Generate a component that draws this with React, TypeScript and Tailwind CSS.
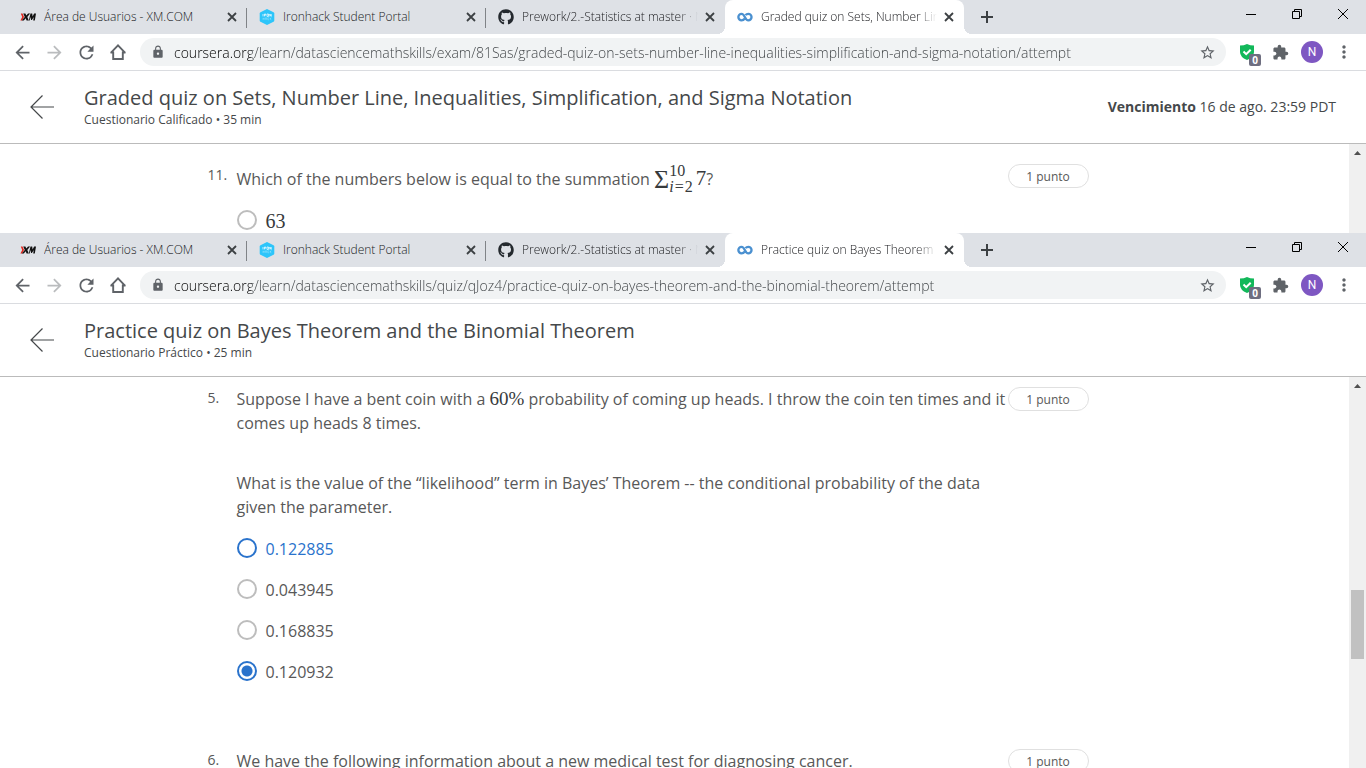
import React, { ReactNode } from "react";
import { FaGithub } from "react-icons/fa";
import {
  MdArrowBack,
  MdArrowForward,
  MdRefresh,
  MdLock,
  MdStarBorder,
  MdExtension,
  MdMoreVert,
} from "react-icons/md";

const UI = "font-['Open_Sans','Noto_Sans',sans-serif]";

function XmLogo() {
  return (
    <svg viewBox="0 0 16 16" className="size-4 shrink-0" aria-hidden="true">
      <path d="M.8 4.600h1.700L4 8l-1.900 3.400H.4L2.200 8z" fill="#e2231a" />
      <path
        d="M3.200 4.600h2.200l.9 2 1.800-2h2L7.300 7.900l1.500 3.500H6.600l-.9-2.100-1.900 2.100H1.700l3.100-3.500zM10.500 4.600h1.700l.4 2.800 1.500-2.800H16l-1.200 6.800h-1.600l.6-3.500-1.900 3.100h-.8l-.8-3-.6 3.400H8.800z"
        fill="#111"
      />
    </svg>
  );
}

function IronhackLogo() {
  return (
    <svg viewBox="0 0 16 16" className="size-4 shrink-0" aria-hidden="true">
      <path d="M8 0l6.500 3.200a1.500 1.500 0 0 1 .8 1.300v7a1.500 1.500 0 0 1-.8 1.300L8 16l-6.500-3.200a1.500 1.500 0 0 1-.8-1.300v-7a1.500 1.500 0 0 1 .8-1.300z" fill="#2dc5fa" />
      <path d="M4 5v2.400M5.500 7.400V5h1.200v1.200H5.500M8 5h1.500v2.400H8zM10.800 7.400V5l1.400 2.400V5" fill="none" stroke="#fff" strokeWidth=".7" />
      <path d="M4 8.800v2M5.200 8.800v2M4 9.800h1.200M6.400 10.800v-2h1.200v2M10 8.800H8.800v2H10M11.200 8.800v2M12.400 8.800l-1.200 1 1.200 1" fill="none" stroke="#9fe4fd" strokeWidth=".5" />
    </svg>
  );
}

function CourseraLogo() {
  return (
    <svg viewBox="0 0 16 16" className="size-4 shrink-0" fill="none" stroke="#4a90d0" strokeWidth="2.300" aria-hidden="true">
      <path d="M7.600 9.800C6.800 10.900 5.800 11.300 4.600 11.300a3.200 3.200 0 0 1 0-6.500C8 4.800 7.600 11.300 11.300 11.300a3.200 3.200 0 0 0 0-6.500C10.200 4.800 9.200 5.200 8.500 6.200" />
    </svg>
  );
}

function CloseGlyph() {
  return (
    <svg viewBox="0 0 16 16" className="size-4" stroke="#3c4043" strokeWidth="1.800" aria-hidden="true">
      <path d="M4 4l8 8M12 4l-8 8" />
    </svg>
  );
}

function Tab({ icon, title, active, divider, fade }: { icon: ReactNode; title: string; active?: boolean; divider?: boolean; fade?: boolean }) {
  return (
    <div
      className={`relative flex min-w-0 shrink basis-[239px] items-center pl-3 pr-[7px] ${active ? "rounded-t-lg bg-white" : ""}`}
    >
      {icon}
      <span
        className={`ml-2 mr-1 min-w-0 flex-1 overflow-hidden whitespace-nowrap text-xs font-light text-[#202124] ${
          fade ? "[mask-image:linear-gradient(90deg,#000_calc(100%-20px),transparent)]" : ""
        }`}
      >
        {title}
      </span>
      <button aria-label="Cerrar pestaña" className="flex size-4 shrink-0 items-center justify-center">
        <CloseGlyph />
      </button>
      {divider && <span className="absolute right-0 top-2 h-5 w-px bg-[#808387]" />}
      {active && (
        <>
          <span className="absolute -left-2 bottom-0 size-2 bg-[radial-gradient(circle_at_0_0,transparent_8px,white_8px)]" />
          <span className="absolute -right-2 bottom-0 size-2 bg-[radial-gradient(circle_at_100%_0,transparent_8px,white_8px)]" />
        </>
      )}
    </div>
  );
}

function TabStrip({ title }: { title: string }) {
  return (
    <div className="flex h-[34px] shrink-0 bg-[#dee1e6]">
      <div className="flex min-w-0 flex-1 pl-2">
        <Tab icon={<XmLogo />} title="Área de Usuarios - XM.COM" divider />
        <Tab icon={<IronhackLogo />} title="Ironhack Student Portal" divider />
        <Tab icon={<FaGithub className="size-4 shrink-0 text-[#24292e]" />} title="Prework/2.-Statistics at master · N" fade />
        <Tab icon={<CourseraLogo />} title={title} active fade />
        <button aria-label="Nueva pestaña" className="ml-[15px] flex w-4 shrink-0 items-center justify-center">
          <svg viewBox="0 0 16 16" className="size-4" stroke="#3c4043" strokeWidth="2" aria-hidden="true">
            <path d="M8 2v12M2 8h12" />
          </svg>
        </button>
      </div>
      <div className="flex h-7 shrink-0 text-black">
        <button aria-label="Minimizar" className="flex w-[46px] items-center justify-center">
          <svg viewBox="0 0 10 10" className="size-[10px]" stroke="currentColor" aria-hidden="true">
            <path d="M0 5.500h10" />
          </svg>
        </button>
        <button aria-label="Restaurar" className="flex w-[46px] items-center justify-center">
          <svg viewBox="0 0 10 10" className="size-[10px]" fill="none" stroke="currentColor" aria-hidden="true">
            <path d="M.5 2.500h7v7h-7zM2.500 2.500v-2h7v7h-2" />
          </svg>
        </button>
        <button aria-label="Cerrar" className="flex w-[46px] items-center justify-center">
          <svg viewBox="0 0 10 10" className="size-[10px]" stroke="currentColor" aria-hidden="true">
            <path d="M0 0l10 10M10 0L0 10" />
          </svg>
        </button>
      </div>
    </div>
  );
}

function ToolButton({ label, children }: { label: string; children: ReactNode }) {
  return (
    <button aria-label={label} className="flex size-8 shrink-0 items-center justify-center text-[#5f6368]">
      {children}
    </button>
  );
}

function HomeIcon() {
  return (
    <svg viewBox="0 0 18 18" className="size-[18px]" fill="none" stroke="currentColor" strokeWidth="1.900" aria-hidden="true">
      <path d="M1.800 9.800L9 2.400l7.200 7.400M4.200 8.500v7.500h9.600V8.500M1.500 9.500h3M13.500 9.500h3" />
    </svg>
  );
}

function Toolbar({ url }: { url: string }) {
  return (
    <div className="flex h-[37px] shrink-0 items-center border-b border-[#dadce0] bg-white pl-[6px] pr-[6px]">
      <ToolButton label="Atrás"><MdArrowBack className="size-[21px]" /></ToolButton>
      <ToolButton label="Adelante"><MdArrowForward className="size-[21px] text-[#babcbe]" /></ToolButton>
      <ToolButton label="Recargar"><MdRefresh className="size-[21px]" /></ToolButton>
      <ToolButton label="Inicio"><HomeIcon /></ToolButton>
      <div className="ml-[6px] flex h-7 min-w-0 flex-1 items-center rounded-full bg-[#f1f3f4] pl-[11px] pr-[10px]">
        <MdLock className="size-[14px] shrink-0 text-[#5f6368]" />
        <input
          aria-label="Barra de direcciones"
          defaultValue={url}
          className="ml-[9px] h-7 min-w-0 flex-1 bg-[linear-gradient(90deg,#000_77px,#3c4043_77px)] bg-clip-text text-sm font-light text-transparent outline-none"
        />
        <button aria-label="Añadir a marcadores" className="shrink-0 text-[#5f6368]"><MdStarBorder className="size-[17px]" /></button>
      </div>
      <button aria-label="Protección" className="relative ml-[11px] flex size-5 shrink-0 items-center justify-center">
        <svg viewBox="0 0 16 16" className="size-4" aria-hidden="true">
          <path d="M1 1.500Q5 1.500 8 0q3 1.500 7 1.500V8q0 5-7 8-7-3-7-8z" fill="#12b85a" />
          <path d="M4.500 7.500l2.700 2.700 4.500-4.500" fill="none" stroke="#fff" strokeWidth="2" />
        </svg>
        <span className="absolute -right-1 top-3 flex size-3 items-center justify-center rounded-xs bg-[#6e6e80] text-[10px] font-bold leading-3 text-white">0</span>
      </button>
      <div className="ml-[7px] flex items-center">
        <ToolButton label="Extensiones"><MdExtension className="size-[17px]" /></ToolButton>
        <ToolButton label="Perfil">
          <span className="flex size-[22px] items-center justify-center rounded-full bg-[#7e57c2] font-[Roboto,sans-serif] text-xs text-white">N</span>
        </ToolButton>
        <ToolButton label="Menú"><MdMoreVert className="size-5" /></ToolButton>
      </div>
    </div>
  );
}

function QuizHeader({ title, meta, due }: { title: string; meta: string; due?: ReactNode }) {
  return (
    <header className="flex h-[73px] shrink-0 items-center border-b border-[#bbbbbb] bg-white pl-[30px] pr-[30px] text-[#45484a]">
      <a href="#volver" aria-label="Volver" className="shrink-0">
        <svg viewBox="0 0 24 24" className="size-6" fill="none" stroke="currentColor" strokeWidth="1.200" aria-hidden="true">
          <path d="M24 12H1M12.500 .5L1 12l11.500 11.500" />
        </svg>
      </a>
      <div className="ml-[30px] min-w-0 flex-1">
        <h1 className="text-xl leading-[26px]">{title}</h1>
        <p className="text-xs leading-[18px]">{meta}</p>
      </div>
      {due && <p className="shrink-0 text-sm">{due}</p>}
    </header>
  );
}

function Scroller({ thumb }: { thumb?: boolean }) {
  return (
    <div className="flex w-[17px] shrink-0 flex-col items-center bg-[#f0f0f0]" aria-hidden="true">
      <svg viewBox="0 0 17 17" className="size-[17px] shrink-0" fill="#505050">
        <path d="M5 11h7L8.500 7z" />
      </svg>
      {thumb && <div className="mt-[196px] h-[69px] w-[13px] bg-[#c1c1c1]" />}
    </div>
  );
}

function Question({ number, children }: { number: string; children: ReactNode }) {
  return (
    <section className="mx-auto flex w-full max-w-[934px] items-start text-[#585858]">
      <span className="w-[29px] shrink-0 text-sm leading-[22px]">{number}</span>
      <div className="min-w-0 max-w-[771px] flex-1 text-base">{children}</div>
      <span className="flex h-6 w-[81px] shrink-0 items-center justify-center rounded-full border border-[#e0e0e0] pt-0.5 text-xs">1 punto</span>
    </section>
  );
}

function Option({ group, label, focused, checked, math }: { group: string; label: string; focused?: boolean; checked?: boolean; math?: boolean }) {
  return (
    <label className={`flex h-[41px] items-center gap-[9px] ${focused ? "text-[#2a73cc]" : ""}`}>
      <input
        type="radio"
        name={group}
        defaultChecked={checked}
        className={`mb-0.5 size-5 shrink-0 appearance-none rounded-full border-2 bg-white checked:border-[#2a73cc] checked:bg-[radial-gradient(circle,#2a73cc_5px,white_6px)] ${
          focused ? "border-[#2a73cc]" : "border-[#bdbdbd]"
        }`}
      />
      <span className={math ? "font-['Liberation_Serif',serif] text-[20px] text-[#373a3c]" : ""}>{label}</span>
    </label>
  );
}

function Summation() {
  return (
    <span className="inline-flex h-6 items-center align-top font-['Liberation_Serif',serif] text-[21px] text-[#373a3c]">
      <span className="text-[26px]">Σ</span>
      <span className="flex flex-col text-base leading-4">
        <span>10</span>
        <span className="flex gap-px"><i>i</i><span>=</span><span>2</span></span>
      </span>
      <span className="ml-[3px]">7</span>
    </span>
  );
}

export default function App() {
  return (
    <div className={`flex h-screen flex-col overflow-hidden bg-white ${UI}`}>
      <div className="flex h-[233px] shrink-0 flex-col overflow-hidden">
        <TabStrip title="Graded quiz on Sets, Number Line" />
        <Toolbar url="coursera.org/learn/datasciencemathskills/exam/81Sas/graded-quiz-on-sets-number-line-inequalities-simplification-and-sigma-notation/attempt" />
        <QuizHeader
          title="Graded quiz on Sets, Number Line, Inequalities, Simplification, and Sigma Notation"
          meta="Cuestionario Calificado • 35 min"
          due={<><b>Vencimiento</b> 16 de ago. 23:59 PDT</>}
        />
        <div className="flex min-h-0 flex-1">
          <main className="min-w-0 flex-1 overflow-hidden pt-5">
            <Question number="11.">
              <p className="pt-[3px]">Which of the numbers below is equal to the summation <Summation />?</p>
              <div className="pt-[9px]"><Option group="q11" label="63" math /></div>
            </Question>
          </main>
          <Scroller />
        </div>
      </div>

      <div className="flex min-h-0 flex-1 flex-col overflow-hidden">
        <TabStrip title="Practice quiz on Bayes Theorem and" />
        <Toolbar url="coursera.org/learn/datasciencemathskills/quiz/qJoz4/practice-quiz-on-bayes-theorem-and-the-binomial-theorem/attempt" />
        <QuizHeader title="Practice quiz on Bayes Theorem and the Binomial Theorem" meta="Cuestionario Práctico • 25 min" />
        <div className="flex min-h-0 flex-1">
          <main className="flex min-w-0 flex-1 flex-col gap-[57px] overflow-hidden pt-[10px]">
            <Question number="5.">
              <p>
                Suppose I have a bent coin with a <span className="font-['Liberation_Serif',serif] text-[19px] leading-6 text-[#373a3c]">60%</span> probability of coming up heads. I throw the coin ten times and it comes up heads 8 times.
              </p>
              <p className="mt-9">
                What is the value of the “likelihood” term in Bayes’ Theorem -- the conditional probability of the data given the parameter.
              </p>
              <div className="mt-[9px]">
                <Option group="q5" label="0.122885" focused />
                <Option group="q5" label="0.043945" />
                <Option group="q5" label="0.168835" />
                <Option group="q5" label="0.120932" checked />
              </div>
            </Question>
            <Question number="6.">
              <p>We have the following information about a new medical test for diagnosing cancer.</p>
            </Question>
          </main>
          <Scroller thumb />
        </div>
      </div>
    </div>
  );
}
